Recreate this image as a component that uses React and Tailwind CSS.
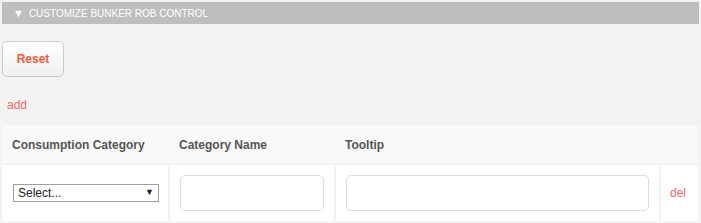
import React from "react";

export default function App() {
  return (
    <div className="w-[701px] h-[223px] bg-[#f3f3f3] p-[2px] font-['Liberation_Sans',Arial,sans-serif] overflow-hidden">
      <div className="h-[22px] bg-[#bebebe] flex items-center pl-[11px] text-white text-[10px] uppercase">
        <span className="text-[11px] mr-[5px]">▼</span>
        <span>Customize Bunker Rob Control</span>
      </div>

      <div className="mt-[17px]">
        <button className="w-[62px] h-[36px] rounded-[5px] border border-[#cccccc] bg-gradient-to-b from-white to-[#f0f0f0] text-[#f4593a] font-bold text-[12px]">
          Reset
        </button>
      </div>

      <div className="mt-[21px] pl-[5px] text-[12px] text-[#f06a6a] leading-[14px]">add</div>

      <div className="mt-[13px] w-[696px]">
        <div className="flex h-[38px] bg-[#f9f9f9] items-center pt-[1px] text-[12px] font-bold text-[#555555]">
          <div className="w-[168px] pl-[10px]">Consumption Category</div>
          <div className="w-[166px] pl-[9px]">Category Name</div>
          <div className="pl-[9px]">Tooltip</div>
        </div>
        <div className="flex gap-[2px] mt-[2px] h-[56px]">
          <div className="w-[166px] bg-white flex items-center pl-[11px]">
            <div className="w-[146px] h-[18px] border border-[#a0a0a0] bg-white flex items-center justify-between px-[4px] text-[12px] text-[#222]">
              <span>Select...</span>
              <span className="text-[9px]">▼</span>
            </div>
          </div>
          <div className="w-[164px] bg-white flex items-center pl-[10px]">
            <div className="w-[144px] h-[36px] border border-[#dddddd] rounded-[5px]"></div>
          </div>
          <div className="w-[323px] bg-white flex items-center pl-[10px]">
            <div className="w-[303px] h-[36px] border border-[#dddddd] rounded-[5px]"></div>
          </div>
          <div className="flex-1 bg-white flex items-center pl-[9px] text-[12px] text-[#f06a6a]">del</div>
        </div>
      </div>
    </div>
  );
}
